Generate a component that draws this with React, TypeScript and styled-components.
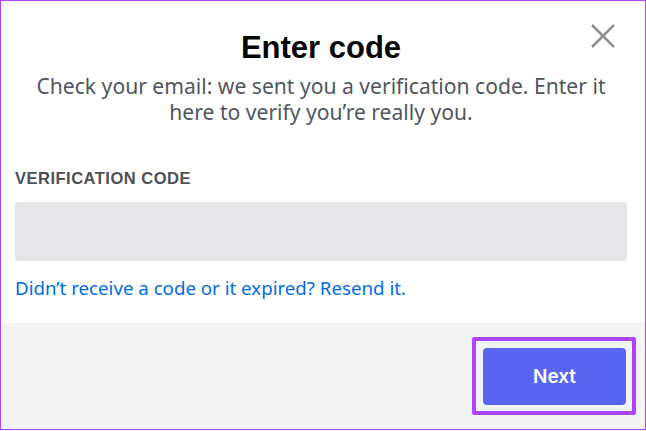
import styled, { createGlobalStyle } from "styled-components";

const GlobalStyle = createGlobalStyle`
  * {
    box-sizing: border-box;
  }
  body {
    margin: 0;
    background-color: #f2f3f5;
    font-family: "Noto Sans", "Liberation Sans", sans-serif;
  }
`;

export default function App() {
  return (
    <>
      <GlobalStyle />
      <Modal>
        <CloseButton aria-label="Close">
          <svg width="24" height="24" viewBox="0 0 24 24">
            <path
              d="M1 1 L23 23 M23 1 L1 23"
              stroke="#8e9297"
              strokeWidth="2.6"
              fill="none"
            />
          </svg>
        </CloseButton>
        <Content>
          <Title>Enter code</Title>
          <Subtitle>
            Check your email: we sent you a verification code. Enter it here to
            verify you’re really you.
          </Subtitle>
          <Label htmlFor="code">Verification Code</Label>
          <CodeInput id="code" type="text" />
          <ResendLink href="#">
            Didn’t receive a code or it expired? Resend it.
          </ResendLink>
        </Content>
        <Footer>
          <Highlight>
            <NextButton>Next</NextButton>
          </Highlight>
        </Footer>
      </Modal>
    </>
  );
}

const Modal = styled.div`
  position: relative;
  width: 646px;
  height: 430px;
  border: 1px solid #b044fb;
  display: flex;
  flex-direction: column;
  background-color: #ffffff;
`;

const CloseButton = styled.button`
  position: absolute;
  top: 23px;
  left: 590px;
  width: 24px;
  height: 24px;
  padding: 0;
  border: none;
  background: none;
  cursor: pointer;

  svg {
    display: block;
  }
`;

const Content = styled.div`
  display: flex;
  flex-direction: column;
  padding: 28px 18px 24px 14px;
  background-color: #ffffff;
`;

const Title = styled.h1`
  margin: 0;
  text-align: center;
  font-family: "Liberation Sans", sans-serif;
  font-size: 31px;
  line-height: 38px;
  font-weight: 700;
  color: #060607;
`;

const Subtitle = styled.p`
  margin: 6px 0 0;
  padding: 0 10px;
  text-align: center;
  font-size: 21.1px;
  line-height: 26px;
  color: #4f5660;
`;

const Label = styled.label`
  margin-top: 43px;
  font-family: "Liberation Sans", sans-serif;
  font-size: 16.5px;
  line-height: 20px;
  font-weight: 700;
  letter-spacing: 0.5px;
  text-transform: uppercase;
  color: #4e5058;
`;

const CodeInput = styled.input`
  margin-top: 14px;
  height: 59px;
  width: 100%;
  border: none;
  border-radius: 4px;
  background-color: #e3e5e8;
  outline: none;
`;

const ResendLink = styled.a`
  margin-top: 16px;
  align-self: flex-start;
  font-size: 18.7px;
  line-height: 22px;
  color: #006ce7;
  text-decoration: none;
`;

const Footer = styled.div`
  flex: 1;
  display: flex;
  justify-content: flex-end;
  align-items: flex-start;
  padding: 14px 9px 0 0;
  background-color: #f2f3f5;
`;

const Highlight = styled.div`
  padding: 7px 6px 6px 7px;
  border: 4px solid #b044fb;
  border-radius: 2px;
`;

const NextButton = styled.button`
  display: block;
  width: 143px;
  height: 57px;
  border: none;
  border-radius: 4px;
  background-color: #5865f2;
  color: #ffffff;
  font-family: "Inter", sans-serif;
  font-size: 19px;
  font-weight: 600;
  cursor: pointer;
`;
